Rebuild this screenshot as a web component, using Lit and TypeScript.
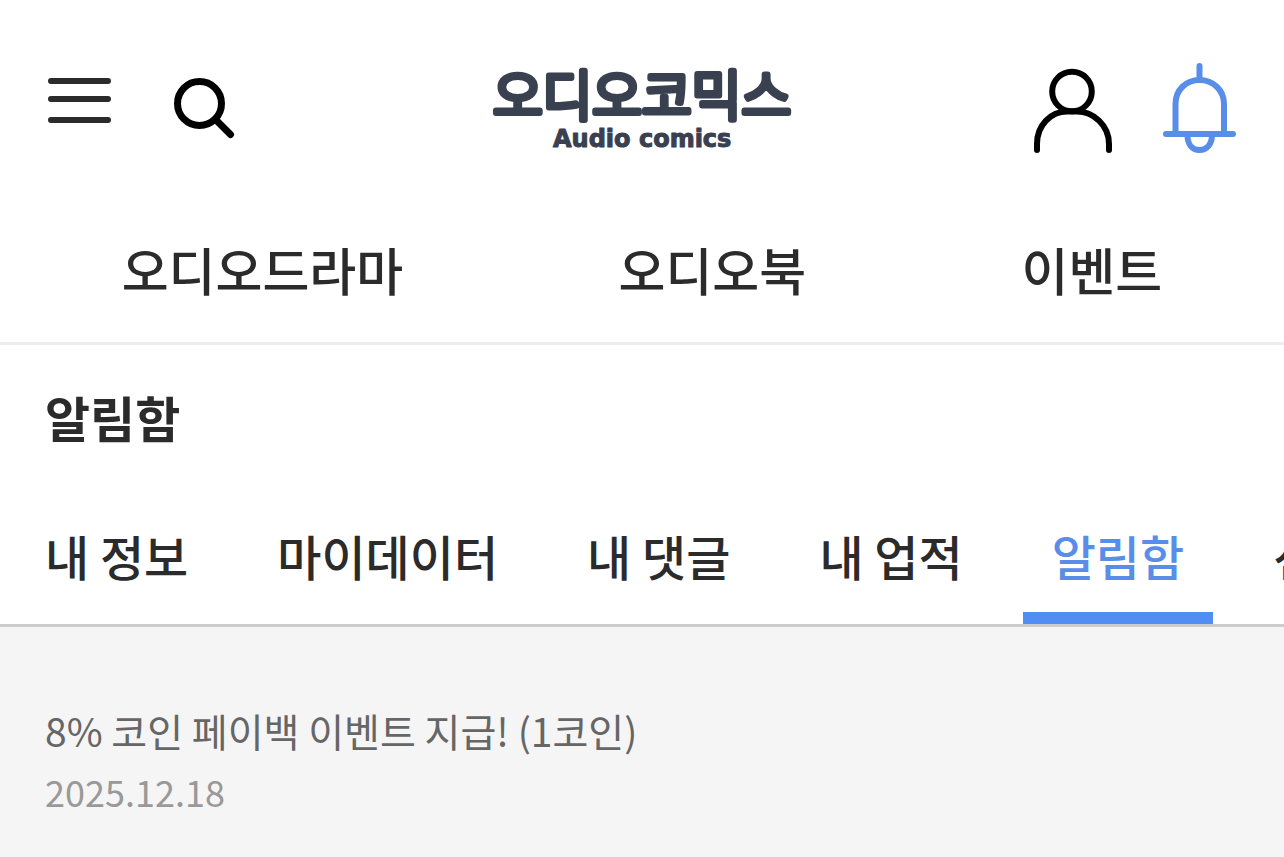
import { LitElement, html, css } from "lit";
import { customElement, state } from "lit/decorators.js";

interface Notice {
  title: string;
  date: string;
}

@customElement("app-root")
export class AppRoot extends LitElement {
  static styles = css`
    :host {
      display: flex;
      flex-direction: column;
      min-height: 100vh;
      background: #fff;
      color: #2b2b2b;
      font-family: "Noto Sans CJK KR", "Noto Sans", sans-serif;
    }
    a {
      color: inherit;
      text-decoration: none;
    }
    button {
      display: block;
      padding: 0;
      border: 0;
      background: none;
      cursor: pointer;
    }
    svg {
      display: block;
      overflow: visible;
    }
    .header {
      display: grid;
      grid-template-columns: 1fr auto 1fr;
      align-items: center;
      padding: 60px 48px 0;
    }
    .group {
      display: flex;
      align-items: flex-start;
      gap: 60px;
    }
    .group.end {
      justify-content: flex-end;
      gap: 51px;
    }
    .logo {
      display: block;
    }
    .logo text {
      fill: #394050;
      stroke: #394050;
      stroke-linejoin: round;
      stroke-linecap: round;
    }
    .logo .main {
      font-size: 54px;
      font-weight: 300;
      stroke-width: 6px;
    }
    .logo .sub {
      font-family: "DejaVu Sans", sans-serif;
      font-size: 24px;
      font-weight: 700;
      stroke-width: 1px;
    }
    .menu {
      display: flex;
      justify-content: space-around;
      padding: 74px 14px 34px;
      border-bottom: 3px solid #eeeef0;
      font-size: 51px;
      line-height: 78px;
      font-weight: 500;
    }
    .heading {
      margin: 0;
      padding: 36px 45px;
      font-size: 49px;
      line-height: 72px;
      font-weight: 700;
    }
    .tabs {
      display: flex;
      gap: 31px;
      padding: 0 16px;
      border-bottom: 3px solid #ccc;
      overflow-x: auto;
      scrollbar-width: none;
      font-size: 48px;
      line-height: 72px;
      font-weight: 500;
      white-space: nowrap;
    }
    .tab {
      flex: none;
      padding: 30px 29px 21px;
      border-bottom: 12px solid transparent;
    }
    .tab.active {
      color: #588eea;
      border-bottom-color: #518ef4;
    }
    .notices {
      flex: 1;
      margin: 0;
      padding: 70px 45px;
      list-style: none;
      background: #f5f5f5;
    }
    .title {
      margin: 0;
      color: #666;
      font-size: 39px;
      line-height: 66px;
    }
    .date {
      display: block;
      color: #999;
      font-size: 36px;
      line-height: 57px;
    }
  `;

  @state() private active = "알림함";

  private menu = ["오디오드라마", "오디오북", "이벤트"];
  private tabs = ["내 정보", "마이데이터", "내 댓글", "내 업적", "알림함", "선물함"];
  private notices: Notice[] = [
    { title: "8% 코인 페이백 이벤트 지급! (1코인)", date: "2025.12.18" },
  ];

  private select(event: Event, tab: string) {
    event.preventDefault();
    this.active = tab;
  }

  render() {
    return html`
      <header class="header">
        <div class="group">
          <button type="button" aria-label="메뉴">
            <svg width="66" height="96" viewBox="0 0 66 96" stroke="#2b2b2b" stroke-width="6" stroke-linecap="round">
              <path d="M3 21H60M3 39H60M3 60H60" />
            </svg>
          </button>
          <button type="button" aria-label="검색">
            <svg width="62" height="96" viewBox="0 0 62 96" fill="none" stroke="#000" stroke-linecap="round">
              <circle cx="25.5" cy="43.5" r="22" stroke-width="7" />
              <path d="M43 61L56.500 74.500" stroke-width="7" />
            </svg>
          </button>
        </div>
        <a class="logo" href="#home" aria-label="오디오코믹스">
          <svg width="300" height="96" viewBox="0 0 300 96">
            <text class="main" x="1" y="56">오디오코믹스</text>
            <text class="sub" x="61" y="87">Audio comics</text>
          </svg>
        </a>
        <div class="group end">
          <button type="button" aria-label="내 계정">
            <svg width="80" height="96" viewBox="0 0 80 96" fill="none" stroke="#000" stroke-width="6" stroke-linecap="round">
              <circle cx="40" cy="31.5" r="19.8" />
              <path d="M5 90V84C5 65 19 51.5 35 51.5H45C61 51.5 77 65 77 84V90" />
            </svg>
          </button>
          <button type="button" aria-label="알림">
            <svg width="73" height="96" viewBox="0 0 73 96" fill="none" stroke="#588eea" stroke-width="6" stroke-linecap="round">
              <path d="M36.5 6V20" />
              <path d="M12.5 73V44C12.5 30 23 20 36.5 20S61 30 61 44V73" />
              <path d="M3 74H70" />
              <path d="M24.500 75C24.500 84 29 90 36.500 90S49 84 49 75" />
            </svg>
          </button>
        </div>
      </header>
      <nav class="menu" aria-label="주 메뉴">
        ${this.menu.map((item) => html`<a href="#${item}">${item}</a>`)}
      </nav>
      <h1 class="heading">알림함</h1>
      <nav class="tabs" aria-label="마이페이지">
        ${this.tabs.map(
          (tab) => html`<a
            class="tab ${tab === this.active ? "active" : ""}"
            href="#${tab}"
            @click=${(e: Event) => this.select(e, tab)}
            >${tab}</a
          >`,
        )}
      </nav>
      <ul class="notices">
        ${this.notices.map(
          (n) => html`<li>
            <p class="title">${n.title}</p>
            <time class="date">${n.date}</time>
          </li>`,
        )}
      </ul>
    `;
  }
}
